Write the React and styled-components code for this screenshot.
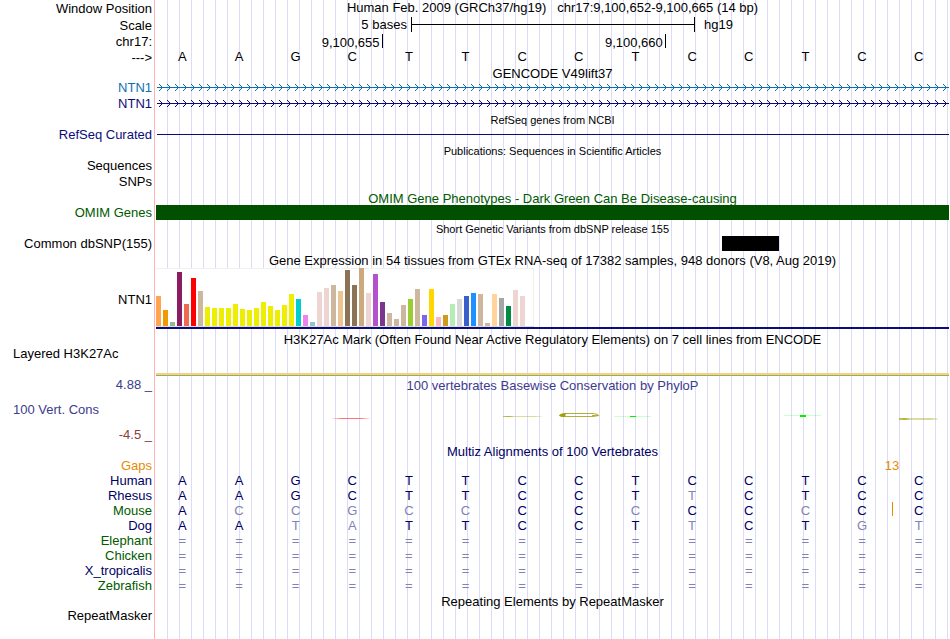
import styled, { createGlobalStyle } from "styled-components";

const GlobalStyle = createGlobalStyle`
  body {
    margin: 0;
    background: #fff;
  }
`;

const Page = styled.main`
  box-sizing: border-box;
  min-height: 100vh;
  padding-right: 1px;
  color: #000;
  font: 13px/15px "Liberation Sans", Arial, sans-serif;
  background-image: linear-gradient(#ffb4b4, #ffb4b4),
    repeating-linear-gradient(
      to right,
      transparent 0 11px,
      #dcdcf8 11px 12px
    );
  background-position: 154px 0, 156px 0;
  background-size: 1px 100%, calc(100% - 157px) 100%;
  background-repeat: no-repeat;
`;

const Row = styled.div`
  display: grid;
  grid-template-columns: 156px minmax(0, 1fr);
  min-height: ${(p) => p.$height || 16}px;
`;

const Label = styled.div`
  padding: ${(p) => p.$top || 0}px 4px 0 13px;
  text-align: ${(p) => p.$align || "right"};
  color: ${(p) => p.$color || "#000"};
  white-space: nowrap;
`;

const Title = styled.h2`
  grid-column: 2;
  margin: 0 0 -2px;
  font-size: ${(p) => (p.$small ? 11 : 13)}px;
  font-weight: 400;
  line-height: 17px;
  text-align: center;
  color: ${(p) => p.$color || "#000"};
`;

const Position = styled.h1`
  margin: 0;
  font-size: 13px;
  font-weight: 400;
  text-align: center;
  white-space: pre;
`;

const Scale = styled.div`
  display: grid;
  grid-template-columns: repeat(28, minmax(0, 1fr));
`;

const ScaleText = styled.span`
  grid-column: ${(p) => p.$column};
  padding: 0 4px 0 10px;
  text-align: ${(p) => p.$align};
  white-space: nowrap;
`;

const ScaleBar = styled.div`
  grid-column: 10 / 20;
  height: 15px;
  margin-right: -1px;
  border: solid #000;
  border-width: 0 1px;
  background: linear-gradient(#000, #000) 0 7px / 100% 1px no-repeat;
`;

const Columns = styled.div`
  display: grid;
  grid-template-columns: repeat(14, minmax(0, 1fr));
`;

const Tick = styled.span`
  grid-column: ${(p) => p.$column};
  height: 14px;
  padding-right: 2px;
  border-right: 1px solid #000;
  line-height: 17px;
  text-align: right;
`;

const Sequences = styled.table`
  width: calc(100% - 2px);
  table-layout: fixed;
  border-collapse: collapse;
`;

const Name = styled.th`
  width: 152px;
  padding: ${(p) => p.$top || 0}px 2px 0 0;
  font-weight: 400;
  text-align: right;
  color: ${(p) => p.$color};
`;

const Base = styled.td`
  position: relative;
  height: 15px;
  padding: 0;
  text-align: center;
  vertical-align: top;
  color: ${(p) => p.$color};
`;

const GapCount = styled.span`
  position: absolute;
  top: 0;
  right: -9px;
  color: #e68a00;
`;

const Insert = styled.span`
  position: absolute;
  top: -1px;
  right: -3px;
  width: 1px;
  height: 14px;
  background: #e68a00;
`;

const Line = styled.div`
  height: 1px;
  margin: 7px 0 0 1px;
  background: #0c0c78;
`;

const Arrows = styled.svg`
  display: block;
  width: 100%;
  height: 15px;
`;

const Phenotype = styled.div`
  position: relative;
  height: 15px;
  background: #005000;
`;

const Variant = styled.div`
  grid-column: 11;
  height: 15px;
  background: #000;
`;

const Expression = styled.div`
  margin-top: 1px;
  height: 59px;
  border-bottom: 2px solid #0c0c78;
`;

const Chart = styled.div`
  display: flex;
  align-items: flex-end;
  gap: 2px;
  box-sizing: border-box;
  width: 378px;
  height: 59px;
  background: #fff;
  border-bottom: 1px solid #dcdcdc;
  box-shadow: inset -1px 1px #f0f0f0;
`;

const Bar = styled.div`
  flex: 0 0 5px;
  background: ${(p) => p.$color};
`;

const Signal = styled.div`
  height: 2px;
  margin-top: 27px;
  background: #ffcc80;
  border-bottom: 1px solid #80b864;
`;

const Conservation = styled.svg`
  display: block;
  width: 100%;
  height: 51px;
`;

const NAVY = "#0c0c78";
const INK = "#000064";
const GREEN = "#005a00";
const PHYLO = "#3c3c8c";

const tan = "#cdb79e";
const yellow = "#eeee00";
const rose = "#eed5d2";

const tissues = [
  [30, "#ffa54f"], [16, "#ee9a00"], [4, "#8fbc8f"], [54, "#8b1c62"],
  [22, "#ee6a50"], [48, "#ff0000"], [35, tan], [19, yellow],
  [18, yellow], [18, yellow], [18, yellow], [22, yellow],
  [17, yellow], [16, yellow], [18, yellow], [24, yellow],
  [20, yellow], [16, yellow], [21, yellow], [32, yellow],
  [27, "#00cdcd"], [11, "#ee82ee"], [4, "#9ac0cd"], [34, rose],
  [38, rose], [41, tan], [35, "#eec591"], [56, "#8b7355"],
  [41, "#8b7355"], [58, "#cdaa7d"], [33, rose], [52, "#b452cd"],
  [24, "#7a378b"], [13, tan], [7, tan], [21, tan],
  [27, "#9acd32"], [37, tan], [11, "#7a67ee"], [37, "#ffd700"],
  [9, "#ffb6c1"], [11, "#cd9b1d"], [22, "#b4eeb4"], [27, "#d9d9d9"],
  [30, "#3a5fcd"], [33, "#1e90ff"], [32, tan], [3, tan],
  [32, "#ffd39b"], [28, "#a6a6a6"], [20, "#008b45"], [36, rose],
  [30, rose], [0, rose],
];

const reference = "AAGCTTCCTCCTCC";

const species = [
  { name: "Human", color: INK, bases: reference },
  { name: "Rhesus", color: INK, bases: "AAGCTTCCTTCTCC" },
  { name: "Mouse", color: GREEN, bases: "ACCGCCCCCCCCCC", insertAt: 12 },
  { name: "Dog", color: INK, bases: "AATATTCCTTCTGT" },
  { name: "Elephant", color: GREEN, bases: "==============" },
  { name: "Chicken", color: GREEN, bases: "==============" },
  { name: "X_tropicalis", color: INK, bases: "==============" },
  { name: "Zebrafish", color: GREEN, bases: "==============" },
];

const Gene = ({ id, name, color }) => (
  <Row>
    <Label $color={color}>{name}</Label>
    <Arrows aria-hidden="true" shapeRendering="crispEdges">
      <defs>
        <pattern id={id} x="1" width="8" height="15" patternUnits="userSpaceOnUse">
          <path
            d="M2 4h1v1h-1zM3 5h1v1h-1zM4 6h1v1h-1zM0 7h8v1h-8zM4 8h1v1h-1zM3 9h1v1h-1zM2 10h1v1h-1z"
            fill={color}
          />
        </pattern>
      </defs>
      <rect x="1" width="100%" height="15" fill={`url(#${id})`} />
    </Arrows>
  </Row>
);

const Heading = ({ children, small, color }) => (
  <Row $height={15}>
    <Title $small={small} $color={color}>
      {children}
    </Title>
  </Row>
);

const Alignment = () => (
  <Sequences>
    <tbody>
      <tr>
        <Name scope="row" $color="#e68a00">
          Gaps
        </Name>
        {[...reference].map((_, i) => (
          <Base key={i}>{i === 12 && <GapCount>13</GapCount>}</Base>
        ))}
      </tr>
      {species.map(({ name, color, bases, insertAt }) => (
        <tr key={name}>
          <Name scope="row" $color={color}>
            {name}
          </Name>
          {[...bases].map((base, i) => (
            <Base key={i} $color={base === reference[i] ? INK : "#8282b4"}>
              {base}
              {i === insertAt && <Insert />}
            </Base>
          ))}
        </tr>
      ))}
    </tbody>
  </Sequences>
);

const PhyloLogo = () => (
  <Conservation
    viewBox="0 0 793 51"
    preserveAspectRatio="none"
    role="img"
    aria-label="PhyloP scores"
  >
    <defs>
      <linearGradient id="fadeRed">
        <stop offset="0" stopColor="#ff6464" stopOpacity="0.1" />
        <stop offset="0.25" stopColor="#ff6464" stopOpacity="0.9" />
        <stop offset="0.75" stopColor="#ff6464" stopOpacity="0.9" />
        <stop offset="1" stopColor="#ff6464" stopOpacity="0.1" />
      </linearGradient>
      <linearGradient id="fadeOlive">
        <stop offset="0" stopColor="#a0a000" stopOpacity="0.6" />
        <stop offset="0.15" stopColor="#a0a000" stopOpacity="0.8" />
        <stop offset="0.3" stopColor="#a0a000" stopOpacity="0.35" />
        <stop offset="0.8" stopColor="#a0a000" stopOpacity="0.4" />
        <stop offset="1" stopColor="#a0a000" stopOpacity="0.15" />
      </linearGradient>
    </defs>
    <rect x="176" y="26" width="38" height="1" fill="url(#fadeRed)" />
    <rect x="347" y="24" width="39" height="1" fill="url(#fadeOlive)" />
    <path
      d="M443 23.5L437 24.5H410Q404 24.5 404 23Q404 21.5 410 21.5H437L442 22.5"
      fill="none"
      stroke="#b4ae32"
    />
    <path d="M403 23L410 21L409 25Q403 25 403 23z" fill="#a0a000" />
    <path d="M436 23.5H443" stroke="#b4ae32" />
    <rect x="458" y="24" width="37" height="1" fill="#00ff00" fillOpacity="0.2" />
    <rect x="474" y="24" width="6" height="1" fill="#00f000" />
    <rect x="628" y="23" width="37" height="1" fill="#00ff00" fillOpacity="0.2" />
    <rect x="644" y="23" width="6" height="2" fill="#00f000" />
    <rect x="743" y="26" width="39" height="2" fill="url(#fadeOlive)" />
  </Conservation>
);

const App = () => (
  <>
    <GlobalStyle />
    <Page>
      <Row $height={17}>
        <Label $top={1}>Window Position</Label>
        <Position>
          {"Human Feb. 2009 (GRCh37/hg19)   chr17:9,100,652-9,100,665 (14 bp)"}
        </Position>
      </Row>
      <Row $height={17}>
        <Label $top={1}>Scale</Label>
        <Scale>
          <ScaleText $column="1 / 10" $align="right">
            5 bases
          </ScaleText>
          <ScaleBar />
          <ScaleText $column="20 / 29" $align="left">
            hg19
          </ScaleText>
        </Scale>
      </Row>
      <Row $height={15}>
        <Label>chr17:</Label>
        <Columns>
          <Tick $column="1 / 5">9,100,655</Tick>
          <Tick $column="5 / 10">9,100,660</Tick>
        </Columns>
      </Row>
      <Sequences>
        <tbody>
          <tr>
            <Name scope="row" $top={1}>
              {"--->"}
            </Name>
            {[...reference].map((base, i) => (
              <Base key={i}>{base}</Base>
            ))}
          </tr>
        </tbody>
      </Sequences>

      <Heading>GENCODE V49lift37</Heading>
      <Gene id="gene-light" name="NTN1" color="#0c70b0" />
      <Gene id="gene-dark" name="NTN1" color={NAVY} />

      <Heading small>RefSeq genes from NCBI</Heading>
      <Row>
        <Label $color={NAVY}>RefSeq Curated</Label>
        <Line />
      </Row>

      <Heading small>Publications: Sequences in Scientific Articles</Heading>
      <Row>
        <Label>Sequences</Label>
      </Row>
      <Row>
        <Label>SNPs</Label>
      </Row>

      <Heading color={GREEN}>
        OMIM Gene Phenotypes - Dark Green Can Be Disease-causing
      </Heading>
      <Row>
        <Label $color={GREEN}>OMIM Genes</Label>
        <Phenotype />
      </Row>

      <Heading small>Short Genetic Variants from dbSNP release 155</Heading>
      <Row>
        <Label>Common dbSNP(155)</Label>
        <Columns>
          <Variant />
        </Columns>
      </Row>

      <Heading>
        Gene Expression in 54 tissues from GTEx RNA-seq of 17382 samples, 948
        donors (V8, Aug 2019)
      </Heading>
      <Row $height={64}>
        <Label $top={25}>NTN1</Label>
        <Expression>
          <Chart>
            {tissues.map(([height, color], i) => (
              <Bar key={i} $color={color} style={{ height }} />
            ))}
          </Chart>
        </Expression>
      </Row>

      <Heading>
        H3K27Ac Mark (Often Found Near Active Regulatory Elements) on 7 cell
        lines from ENCODE
      </Heading>
      <Row $height={31}>
        <Label $align="left">Layered H3K27Ac</Label>
        <Signal />
      </Row>

      <Row $height={15}>
        <Label $color={PHYLO}>4.88 _</Label>
        <Title $color={PHYLO}>
          100 vertebrates Basewise Conservation by PhyloP
        </Title>
      </Row>
      <Row $height={51}>
        <div>
          <Label $top={10} $align="left" $color={PHYLO}>
            100 Vert. Cons
          </Label>
          <Label $top={10} $color="#8c3c3c">
            -4.5 _
          </Label>
        </div>
        <PhyloLogo />
      </Row>

      <Heading color={INK}>Multiz Alignments of 100 Vertebrates</Heading>
      <Alignment />

      <Heading>Repeating Elements by RepeatMasker</Heading>
      <Row>
        <Label>RepeatMasker</Label>
      </Row>
    </Page>
  </>
);

export default App;
